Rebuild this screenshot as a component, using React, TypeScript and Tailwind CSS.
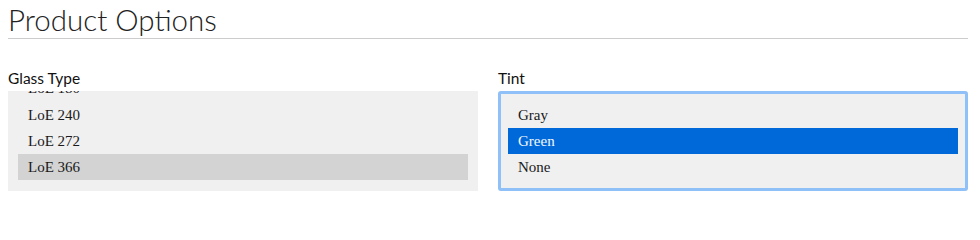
import React from "react";

type Opt = { label: string; selected?: boolean };

function ListBox({ options, focused }: { options: Opt[]; focused?: boolean }) {
  return (
    <div
      className={
        "h-[100px] overflow-hidden bg-[#f0f0f0] " +
        (focused
          ? "rounded-[3px] outline-[3px] outline-solid outline-[#8fc0f7] [outline-offset:-3px]"
          : "")
      }
    >
      <div className="-mt-[16px] px-[10px]">
        {options.map((o, i) => (
          <div
            key={o.label}
            className={
              "h-[26px] pl-[10px] text-[15px] leading-[26px] whitespace-nowrap " +
              (i === 0 ? "mb-[1px] " : "") +
              (o.selected
                ? focused
                  ? "bg-[#0069d9] text-[#f4f8ff]"
                  : "bg-[#d3d3d3] text-[#1a1a1a]"
                : "text-[#1a1a1a]")
            }
            style={{ fontFamily: '"Liberation Serif", "DejaVu Serif", serif' }}
          >
            {o.label}
          </div>
        ))}
      </div>
    </div>
  );
}

export default function App() {
  return (
    <div
      className="w-[980px] h-[205px] bg-white px-2"
      style={{ fontFamily: 'Lato, "Open Sans", sans-serif' }}
    >
      <div className="pt-1 pb-[2px] border-b border-[#cccccc] w-[960px]">
        <div className="text-[29.5px] leading-[32px] font-light text-[#222222]">
          Product Options
        </div>
      </div>
      <div className="mt-[30px] grid grid-cols-2 gap-5 w-[960px]">
        <div>
          <div className="text-[15.5px] leading-[18px] text-[#111111] mb-1">Glass Type</div>
          <ListBox
            options={[
              { label: "LoE 180" },
              { label: "LoE 240" },
              { label: "LoE 272" },
              { label: "LoE 366", selected: true },
            ]}
          />
        </div>
        <div>
          <div className="text-[15.5px] leading-[18px] text-[#111111] mb-1">Tint</div>
          <ListBox
            focused
            options={[
              { label: "Bronze" },
              { label: "Gray" },
              { label: "Green", selected: true },
              { label: "None" },
            ]}
          />
        </div>
      </div>
    </div>
  );
}
